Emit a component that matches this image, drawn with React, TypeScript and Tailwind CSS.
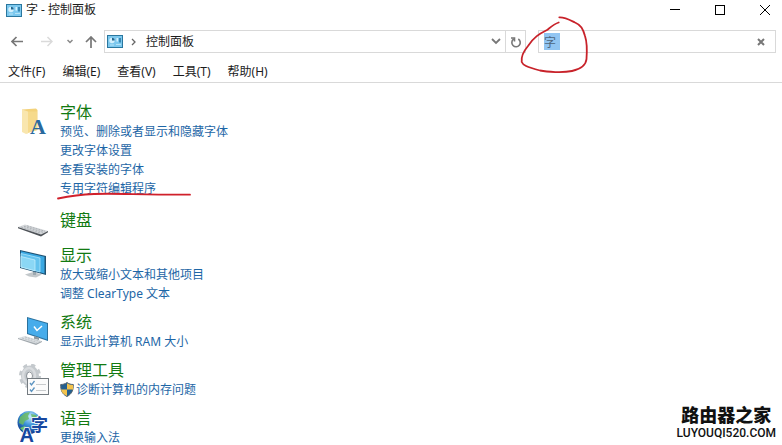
import type { ReactNode } from "react";

const sans = "font-['Noto_Sans','Noto_Sans_CJK_SC',sans-serif]";

function PanelIcon() {
  return (
    <svg width="16" height="13" viewBox="0 0 16 13" className="shrink-0" aria-hidden="true">
      <rect x="0.500" y="0.500" width="15" height="12" fill="#7cc8ee" stroke="#2a779f" />
      <circle cx="5" cy="5.500" r="2.700" fill="#d3f0fd" />
      <path d="M5 5.500V2.800A2.700 2.700 0 0 1 7.700 5.500Z" fill="#21658f" />
      <rect x="9.500" y="3" width="1.500" height="3.500" fill="#d3f0fd" />
      <rect x="12" y="3" width="2" height="4.500" fill="#3787b3" />
      <path d="M3 10h4M9 9.500h5" stroke="#b5e4f8" />
    </svg>
  );
}

function FolderIcon() {
  return (
    <svg width="32" height="32" viewBox="0 0 32 32" aria-hidden="true">
      <path d="M5 3.500 19 2.500 20.500 4V24L9 27Z" fill="#f3d27b" />
      <path d="M5 3.500 11 5.500V27.500L9 28 5 26Z" fill="#f9e6ae" />
      <path d="M11 5.500H20V24L11 27Z" fill="#f6da8c" />
      <text x="13" y="28" fontSize="22" fontWeight="bold" fill="#29699d" fontFamily="Liberation Serif, serif">A</text>
    </svg>
  );
}

function KeyboardIcon() {
  return (
    <svg width="32" height="32" viewBox="0 0 32 32" aria-hidden="true">
      <path d="M1 13 8 10.500 31 17 24 21Z" fill="#d4d7da" />
      <path d="M1 13 24 20.500 31 17V18.300L24 22.500 1 14.200Z" fill="#4e5358" />
      <path d="M4 13 24 19.300M7 12.300 26 18.300M10 11.800 28 17.300" stroke="#a3a8ad" strokeDasharray="2 1" strokeWidth="0.800" />
    </svg>
  );
}

function DisplayIcon() {
  return (
    <svg width="32" height="32" viewBox="0 0 32 32" aria-hidden="true">
      <path d="M8 25.500 16 23 25 25.500 19 28.500 12 27.500Z" fill="#c3c8cb" />
      <path d="M16 20H19V26H16Z" fill="#9da8b0" />
      <path d="M3 1 29 7V26L3 19Z" fill="#1f5273" />
      <path d="M4 2.300 27.500 7.800V24.500L4 18Z" fill="#3aa8e2" />
      <path d="M4 4.500 23 9V23L4 18Z" fill="#64c3ee" stroke="#b9eaff" strokeWidth="0.700" />
      <path d="M4 7.500 18 11V21.800L4 18Z" fill="#8bd7f5" stroke="#c8f0ff" strokeWidth="0.700" />
    </svg>
  );
}

function SystemIcon() {
  return (
    <svg width="32" height="32" viewBox="0 0 32 32" aria-hidden="true">
      <path d="M10 1 31 7V25L10 18Z" fill="#2a719d" />
      <path d="M11 2.300 30 7.700V23.500L11 17.200Z" fill="#46aceb" />
      <path d="m17 10.500 3 4 5-4.500" fill="none" stroke="#fff" strokeWidth="1.500" />
      <path d="M17 20 22 21.500V24L17 23Z" fill="#8c989f" />
      <path d="M1 22 8 20 25 25 19 28Z" fill="#dce0e3" />
      <path d="M1 22 19 27.500 25 25V26L19 29 1 23Z" fill="#a1a8ad" />
      <path d="M5 22 20 26.500M8 21 23 25.500" stroke="#b3b9bd" strokeDasharray="2 1" strokeWidth="0.800" />
    </svg>
  );
}

function ToolsIcon() {
  return (
    <svg width="32" height="32" viewBox="0 0 32 32" aria-hidden="true">
      <g fill="none">
        <ellipse cx="13" cy="12" rx="6" ry="7.500" stroke="#c4c9cd" strokeWidth="6" />
        <ellipse cx="13" cy="12" rx="9.500" ry="11" stroke="#c4c9cd" strokeWidth="3" strokeDasharray="4.200 4" />
        <ellipse cx="12" cy="11.500" rx="6" ry="7.500" stroke="#d9dcdf" strokeWidth="2.500" />
        <ellipse cx="12.500" cy="12" rx="3" ry="4" stroke="#8f959b" />
      </g>
      <rect x="10.500" y="14.500" width="21" height="16" fill="#fbfbfb" stroke="#747b80" />
      <path d="m13 19 1.500 2 3-4M13 25.500l1.500 2 3-4" fill="none" stroke="#5b93c0" strokeWidth="1.300" />
      <path d="M19 20.500h10M19 26.500h10" stroke="#c8cbcd" />
    </svg>
  );
}

function LanguageIcon() {
  return (
    <svg width="32" height="32" viewBox="0 0 32 32" className="overflow-visible" aria-hidden="true">
      <defs>
        <radialGradient id="globe" cx="55%" cy="25%" r="75%">
          <stop offset="0" stopColor="#c7ecff" />
          <stop offset="0.500" stopColor="#3a91d8" />
          <stop offset="1" stopColor="#0b398d" />
        </radialGradient>
      </defs>
      <circle cx="12" cy="10.500" r="11.500" fill="url(#globe)" />
      <path d="M3 5 8 1 13 0 11 4 12 7 8 9 6 13 2 11ZM14 2 19 3 22 7 17 9 15 6Z" fill="#6aba62" opacity="0.850" />
      <path d="M3 16 8 14 10 18 7 20Z" fill="#6bc36a" />
      <g fill="#17479f" stroke="#fff" strokeWidth="1.500" paintOrder="stroke">
        <text x="14" y="19" fontSize="17" fontWeight="bold" fontFamily="Noto Sans CJK SC, sans-serif">字</text>
        <text x="2.500" y="29.500" fontSize="20" fontWeight="bold" fontFamily="Liberation Sans, sans-serif">A</text>
      </g>
    </svg>
  );
}

function ShieldIcon() {
  return (
    <svg width="14" height="15" viewBox="0 0 14 15" className="shrink-0" aria-hidden="true">
      <path d="M7 0.500C5 2 3 2.500 0.700 2.500 0.500 8 2 12 7 14.500 12 12 13.500 8 13.300 2.500 11 2.500 9 2 7 0.500Z" fill="#245f8e" stroke="#5a666e" />
      <path d="M7 1.200V7.500H13C13.300 6 13.100 4 12.900 3 10.500 3 8.500 2.300 7 1.200ZM1 7.500H7V14C3 12 1.500 10 1 7.500Z" fill="#f3c34c" />
    </svg>
  );
}

type Section = { title: string; icon: ReactNode; links: string[]; shield?: boolean; space: string };

const sections: Section[] = [
  { title: "字体", icon: <FolderIcon />, links: ["预览、删除或者显示和隐藏字体", "更改字体设置", "查看安装的字体", "专用字符编辑程序"], space: "pb-[13px]" },
  { title: "键盘", icon: <KeyboardIcon />, links: [], space: "pb-0" },
  { title: "显示", icon: <DisplayIcon />, links: ["放大或缩小文本和其他项目", "调整 ClearType 文本"], space: "pb-[10px]" },
  { title: "系统", icon: <SystemIcon />, links: ["显示此计算机 RAM 大小"], space: "pb-[10px]" },
  { title: "管理工具", icon: <ToolsIcon />, links: ["诊断计算机的内存问题"], shield: true, space: "pb-[10px]" },
  { title: "语言", icon: <LanguageIcon />, links: ["更换输入法"], space: "pb-0" },
];

function TitleBar() {
  return (
    <header className="flex h-5 items-center pl-[6px] pr-3">
      <PanelIcon />
      <h1 className="ml-1 text-xs">字 - 控制面板</h1>
      <div className="ml-auto flex items-center gap-[35px]">
        <button aria-label="最小化">
          <svg width="10" height="10" viewBox="0 0 10 10" className="block"><path d="M0 4.500h10" stroke="#000" /></svg>
        </button>
        <button aria-label="最大化">
          <svg width="10" height="10" viewBox="0 0 10 10" className="block"><rect x="0.500" y="0.500" width="9" height="9" fill="none" stroke="#000" /></svg>
        </button>
        <button aria-label="关闭">
          <svg width="10" height="10" viewBox="0 0 10 10" className="block"><path d="m0 0 10 10M10 0 0 10" stroke="#000" /></svg>
        </button>
      </div>
    </header>
  );
}

function AddressRow() {
  return (
    <div className="mt-[10px] flex h-[23px] items-stretch pl-[11px] pr-[6px]">
      <nav className="flex w-[93px] shrink-0 items-center" aria-label="导航">
        <button aria-label="后退">
          <svg width="12" height="11" viewBox="0 0 12 11" className="block" fill="none" stroke="#777" strokeWidth="1.700"><path d="M12 5.500H1M5.500 1 1 5.500 5.500 10" /></svg>
        </button>
        <button aria-label="前进" className="ml-[18px]">
          <svg width="12" height="11" viewBox="0 0 12 11" className="block" fill="none" stroke="#dadada" strokeWidth="1.500"><path d="M0 5.500H11M6.500 1 11 5.500 6.500 10" /></svg>
        </button>
        <button aria-label="最近的位置" className="ml-[14px]">
          <svg width="6" height="5" viewBox="0 0 6 5" className="block" fill="none" stroke="#888" strokeWidth="1.500"><path d="m0.500 1 2.500 2.500L5.500 1" /></svg>
        </button>
        <button aria-label="向上" className="ml-3">
          <svg width="12" height="12" viewBox="0 0 12 12" className="block" fill="none" stroke="#777" strokeWidth="1.700"><path d="M6 12V1M1 6 6 1l5 5" /></svg>
        </button>
      </nav>
      <div className="flex min-w-0 flex-1 items-center border border-[#d9d9d9] pl-[2px]">
        <PanelIcon />
        <svg width="5" height="8" viewBox="0 0 5 8" className="ml-2 shrink-0" fill="none" stroke="#666" strokeWidth="1.300"><path d="m1 1 3 3-3 3" /></svg>
        <span className="ml-[10px] flex-1 text-xs">控制面板</span>
        <button aria-label="展开地址" className="px-1">
          <svg width="10" height="7" viewBox="0 0 10 7" className="block" fill="none" stroke="#777" strokeWidth="1.800"><path d="m1 1 4 4 4-4" /></svg>
        </button>
        <button aria-label="刷新" className="flex w-5 items-center justify-center self-stretch border-l border-[#d9d9d9]">
          <svg width="12" height="12" viewBox="0 0 12 12" className="block" fill="none" stroke="#777" strokeWidth="1.600"><path d="M8.300 3A4.200 4.200 0 1 1 3.500 3.200M1 2H4.500V5.500" /></svg>
        </button>
      </div>
      <div className="ml-3 flex w-[238px] items-center border border-[#d9d9d9] pl-[5px] pr-[10px]">
        <input
          aria-label="搜索控制面板"
          defaultValue="字"
          className="h-[17px] min-w-0 flex-1 bg-[linear-gradient(#91c5f2,#91c5f2)] bg-[length:16px_17px] bg-no-repeat text-xs text-[#4d6680] outline-none"
        />
        <button aria-label="清除搜索">
          <svg width="8" height="8" viewBox="0 0 8 8" className="block" stroke="#777" strokeWidth="2"><path d="m1 1 6 6M7 1 1 7" /></svg>
        </button>
      </div>
    </div>
  );
}

function MenuBar() {
  return (
    <nav className="flex h-[30px] items-center gap-[17px] border-b border-[#d9d9d9] pt-2 pl-2 text-xs" aria-label="菜单">
      {["文件(F)", "编辑(E)", "查看(V)", "工具(T)", "帮助(H)"].map((label) => (
        <button key={label} className="whitespace-nowrap">{label}</button>
      ))}
    </nav>
  );
}

export default function App() {
  return (
    <div className={`relative h-screen overflow-hidden bg-white text-[#1c1c1c] ${sans}`}>
      <TitleBar />
      <AddressRow />
      <MenuBar />
      <main className="pt-5 pl-[17px]">
        {sections.map((s) => (
          <section key={s.title} className={`flex items-start ${s.space}`}>
            <div className="w-[43px] shrink-0 pt-[3px] [&>svg]:block">{s.icon}</div>
            <div>
              <h2 className="text-base leading-[19px] text-[#127a12]">{s.title}</h2>
              <ul>
                {s.links.map((link) => (
                  <li key={link} className="flex h-[19px] items-center">
                    <a href="#" className="flex items-center gap-[2px] text-xs leading-[19px] text-[#1d66a6]">
                      {s.shield && <ShieldIcon />}
                      {link}
                    </a>
                  </li>
                ))}
              </ul>
            </div>
          </section>
        ))}
      </main>

      <svg className="pointer-events-none absolute top-[15px] left-[519px]" width="70" height="60" viewBox="0 0 70 60" fill="none" stroke="#c8222a" strokeWidth="1.800" strokeLinecap="round" aria-hidden="true">
        <path d="M39.700 7.500C35 9 33 11 28 15 20 19 15 22 9 31 4 37 2 42 2.700 47 4 50 7 52 21 55.500 28 57 44 58 53 56 62 54 67 50 67.500 44 68 37 68 27 66 21 64 14 62 10 56 7.500 51 5 46 2 40.300 2.300" />
      </svg>
      <svg className="pointer-events-none absolute top-[190px] left-[56px]" width="136" height="10" viewBox="0 0 136 10" fill="none" stroke="#d0202b" strokeWidth="1.800" strokeLinecap="round" aria-hidden="true">
        <path d="M2 8.500C14 6 24 4.500 38 4 60 3 85 5 134 4.700" />
      </svg>
      <aside className="absolute right-[6px] bottom-[6px] flex flex-col items-center text-[#111]">
        <span className="text-lg leading-6 font-black">路由器之家</span>
        <span className="font-['Roboto','Liberation_Sans',sans-serif] text-xs leading-3 font-medium">LUYOUQI520.COM</span>
      </aside>
    </div>
  );
}
